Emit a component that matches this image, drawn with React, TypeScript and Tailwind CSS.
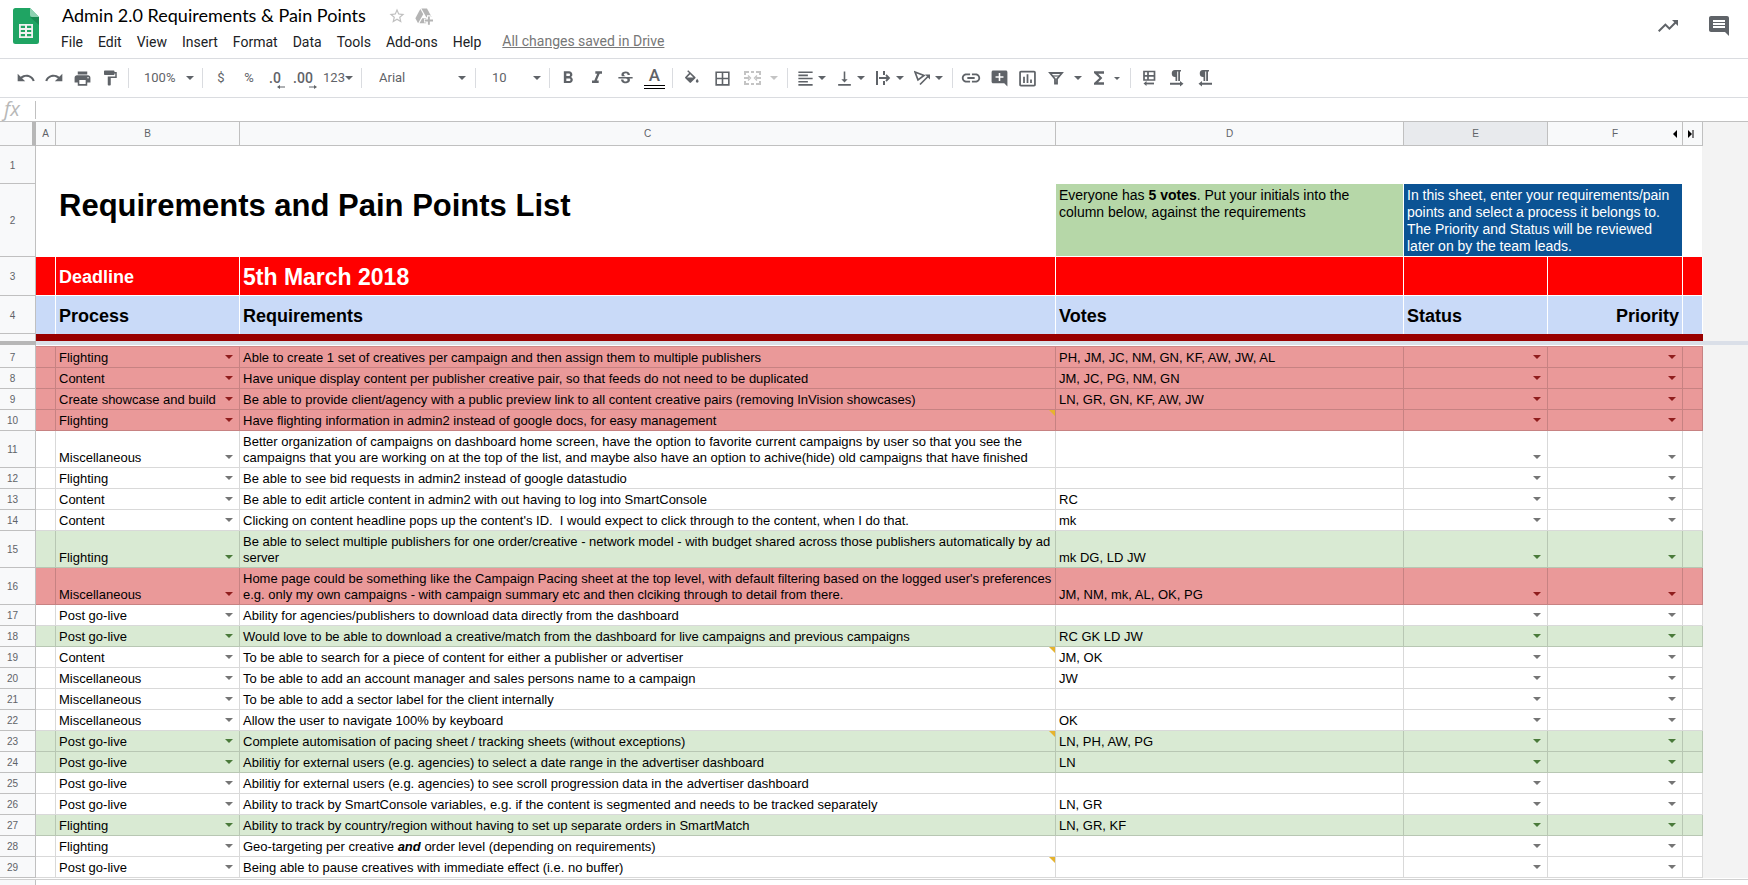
import React from "react";
import {
  MdUndo, MdRedo, MdPrint, MdFormatPaint, MdFormatBold, MdFormatItalic, MdStrikethroughS,
  MdBorderAll, MdFormatAlignLeft, MdVerticalAlignBottom, MdInsertLink,
  MdAddComment, MdInsertChartOutlined, MdFunctions, MdTrendingUp, MdComment, MdStarBorder,
} from "react-icons/md";

type Tone = "red" | "green" | "plain";

type Item = {
  n: number;
  process: string;
  text: React.ReactNode;
  votes?: string;
  tone?: Tone;
  note?: boolean;
};

const items: Item[] = [
  { n: 7, process: "Flighting", text: "Able to create 1 set of creatives per campaign and then assign them to multiple publishers", votes: "PH, JM, JC, NM, GN, KF, AW, JW, AL", tone: "red" },
  { n: 8, process: "Content", text: "Have unique display content per publisher creative pair, so that feeds do not need to be duplicated", votes: "JM, JC, PG, NM, GN", tone: "red" },
  { n: 9, process: "Create showcase and build", text: "Be able to provide client/agency with a public preview link to all content creative pairs (removing InVision showcases)", votes: "LN, GR, GN, KF, AW, JW", tone: "red" },
  { n: 10, process: "Flighting", text: "Have flighting information in admin2 instead of google docs, for easy management", tone: "red", note: true },
  { n: 11, process: "Miscellaneous", text: "Better organization of campaigns on dashboard home screen, have the option to favorite current campaigns by user so that you see the\ncampaigns that you are working on at the top of the list, and maybe also have an option to achive(hide) old campaigns that have finished" },
  { n: 12, process: "Flighting", text: "Be able to see bid requests in admin2 instead of google datastudio" },
  { n: 13, process: "Content", text: "Be able to edit article content in admin2 with out having to log into SmartConsole", votes: "RC" },
  { n: 14, process: "Content", text: "Clicking on content headline pops up the content's ID.  I would expect to click through to the content, when I do that.", votes: "mk" },
  { n: 15, process: "Flighting", text: "Be able to select multiple publishers for one order/creative - network model - with budget shared across those publishers automatically by ad\nserver", votes: "mk DG, LD JW", tone: "green" },
  { n: 16, process: "Miscellaneous", text: "Home page could be something like the Campaign Pacing sheet at the top level, with default filtering based on the logged user's preferences\ne.g. only my own campaigns - with campaign summary etc and then clciking through to detail from there.", votes: "JM, NM, mk, AL, OK, PG", tone: "red" },
  { n: 17, process: "Post go-live", text: "Ability for agencies/publishers to download data directly from the dashboard" },
  { n: 18, process: "Post go-live", text: "Would love to be able to download a creative/match from the dashboard for live campaigns and previous campaigns", votes: "RC GK LD JW", tone: "green" },
  { n: 19, process: "Content", text: "To be able to search for a piece of content for either a publisher or advertiser", votes: "JM, OK", note: true },
  { n: 20, process: "Miscellaneous", text: "To be able to add an account manager and sales persons name to a campaign", votes: "JW" },
  { n: 21, process: "Miscellaneous", text: "To be able to add a sector label for the client internally" },
  { n: 22, process: "Miscellaneous", text: "Allow the user to navigate 100% by keyboard", votes: "OK" },
  { n: 23, process: "Post go-live", text: "Complete automisation of pacing sheet / tracking sheets (without exceptions)", votes: "LN, PH, AW, PG", tone: "green", note: true },
  { n: 24, process: "Post go-live", text: "Abilitiy for external users (e.g. agencies) to select a date range in the advertiser dashboard", votes: "LN", tone: "green" },
  { n: 25, process: "Post go-live", text: "Abilitiy for external users (e.g. agencies) to see scroll progression data in the advertiser dashboard" },
  { n: 26, process: "Post go-live", text: "Ability to track by SmartConsole variables, e.g. if the content is segmented and needs to be tracked separately", votes: "LN, GR" },
  { n: 27, process: "Flighting", text: "Ability to track by country/region without having to set up separate orders in SmartMatch", votes: "LN, GR, KF", tone: "green" },
  { n: 28, process: "Flighting", text: <>Geo-targeting per creative <b><i>and</i></b> order level (depending on requirements)</> },
  { n: 29, process: "Post go-live", text: "Being able to pause creatives with immediate effect (i.e. no buffer)", note: true },
];

const processes = ["Flighting", "Content", "Create showcase and build", "Miscellaneous", "Post go-live"];

const rowBg: Record<Tone, string> = { red: "bg-[#ea9999]", green: "bg-[#d9ead3]", plain: "bg-white" };
const arrowColor: Record<Tone, string> = { red: "text-[#8f1d1d]", green: "text-[#4a7a3a]", plain: "text-[#757575]" };

function Caret({ className = "" }: { className?: string }) {
  return (
    <svg viewBox="0 0 8 4" className={`h-1 w-2 shrink-0 ${className}`} fill="currentColor" aria-hidden="true">
      <path d="M0 0h8L4 4z" />
    </svg>
  );
}

function Tool({ label, className = "w-7", children }: { label: string; className?: string; children: React.ReactNode }) {
  return (
    <button type="button" aria-label={label} className={`flex h-7 items-center justify-center ${className}`}>
      {children}
    </button>
  );
}

function MenuTool({ label, children }: { label: string; children: React.ReactNode }) {
  return (
    <button type="button" aria-label={label} className="flex h-7 w-[39px] items-center gap-px pl-px">
      <span className="flex w-6 justify-center">{children}</span>
      <Caret />
    </button>
  );
}

function Separator() {
  return <div className="h-5 w-px bg-[#dadce0]" />;
}

function Group({ className = "px-1", children }: { className?: string; children: React.ReactNode }) {
  return <div className={`flex items-center ${className}`}>{children}</div>;
}

function ToolSelect({ label, value, className, caret }: { label: string; value: string; className: string; caret: string }) {
  return (
    <div className="relative flex items-center">
      <select aria-label={label} defaultValue={value} className={`h-7 appearance-none bg-transparent text-[13px] ${className}`}>
        <option>{value}</option>
      </select>
      <Caret className={`pointer-events-none absolute ${caret}`} />
    </div>
  );
}

function Decimal({ text, more }: { text: string; more?: boolean }) {
  return (
    <span className="flex flex-col items-end pt-1 pr-1">
      <span className="text-[14px] leading-[14px] font-medium">{text}</span>
      <svg viewBox="0 0 8 4" className="-mr-1 h-1 w-2" aria-hidden="true" fill="currentColor">
        {more ? <path d="M0 1.400h5V0l3 2-3 2V2.600H0z" /> : <path d="M8 1.400H3V0L0 2l3 2V2.600h5z" />}
      </svg>
    </span>
  );
}

function Pilcrow({ rtl }: { rtl?: boolean }) {
  return (
    <svg viewBox="0 0 14 18" className="h-[18px] w-[14px]" fill="currentColor" aria-hidden="true">
      <path d="M5 1h6v1.500h-1V12H8.200V2.500H7.200V12H5.500V8A3.500 3.500 0 0 1 5 1z" />
      {rtl ? <path d="M14 13.800H4V12L.5 14.800 4 17.500v-1.700h10z" /> : <path d="M0 13.800h10V12l3.500 2.800L10 17.500v-1.700H0z" />}
    </svg>
  );
}

function SheetsLogo() {
  return (
    <svg viewBox="0 0 26 36" className="h-9 w-[26px]" aria-hidden="true">
      <path d="M2.500 0H17l9 9v24.500a2.500 2.500 0 0 1-2.500 2.500h-21A2.500 2.500 0 0 1 0 33.500v-31A2.500 2.500 0 0 1 2.500 0z" fill="#1fa463" />
      <path d="M17 9h9v8z" fill="#188a52" />
      <path d="M17 0l9 9h-7a2 2 0 0 1-2-2z" fill="#8ed1b1" />
      <path d="M6 16h14v14H6zM7.800 17.800v2.100h4.200v-2.100zM14 17.800v2.100h4.200v-2.100zM7.800 21.900V24h4.200v-2.100zM14 21.900V24h4.200v-2.100zM7.800 26v2.200h4.200V26zM14 26v2.200h4.200V26z" fill="#f1f1f1" fillRule="evenodd" />
    </svg>
  );
}

function DriveAdd() {
  return (
    <svg viewBox="0 0 24 24" className="h-[18px] w-[18px]" aria-hidden="true">
      <g fill="#b4b4b4">
        <path d="M7.100 2.500L.5 15l3.600 6.500L11 9.500z" />
        <path d="M9.700 15L6 21.500h9V15z" />
        <path d="M22 13L16 2H8.500L15 13.500z" />
      </g>
      <path d="M18.500 11v13M12 18h12" stroke="#fff" strokeWidth="5" />
      <path d="M18.500 12.500v11M13 18h11" stroke="#b4b4b4" strokeWidth="2.600" />
    </svg>
  );
}

function SelectCell({ label, value, tone, options }: { label: string; value: string; tone: Tone; options: string[] }) {
  return (
    <div className="relative flex">
      <select aria-label={label} defaultValue={value} className="h-4 w-full cursor-pointer appearance-none bg-transparent pl-[3px] leading-4">
        {options.map((o) => (
          <option key={o}>{o}</option>
        ))}
      </select>
      <Caret className={`pointer-events-none absolute right-[6px] bottom-[7px] ${arrowColor[tone]}`} />
    </div>
  );
}

const rowHead = "border-r border-b border-[#c0c0c0] bg-[#f8f9fa] p-0 pt-[2px] pr-[10px] text-center align-middle text-[10px] font-normal text-[#5f6368]";
const colHeadBase = "border-r border-b border-[#c0c0c0] p-0 text-center text-[10px] font-normal text-[#5f6368]";
const colHead = `${colHeadBase} bg-[#f8f9fa]`;
const cell = "border-r border-b border-black/15 px-0 pt-[3px] pb-px align-bottom";
const textCell = "border-r border-b border-black/15 px-[3px] pt-[3px] pb-px align-bottom";
const banner = "border-r border-b border-white px-[3px] pt-px pb-0 text-left align-middle";
const heading = "border-r border-white px-[3px] pt-[2px] pb-0";
const noteCell = "border-r border-b border-white px-[3px] pt-[3px] pb-px align-top text-[14px] leading-[17px]";
const filler = "bg-[#f3f3f3] p-0";

export default function App() {
  return (
    <div className="flex min-h-screen w-full flex-col overflow-hidden bg-white font-['Roboto',sans-serif] text-[#5f6368]">
      <header className="flex h-[58px] items-start justify-between pt-2 pr-[17px] pl-[13px]">
        <div className="flex items-start">
          <SheetsLogo />
          <div className="ml-[23px] flex flex-col">
            <div className="flex h-4 items-center">
              <h1 className="pb-[2px] text-[18px] leading-4 text-black font-['Lato',sans-serif]">Admin 2.0 Requirements &amp; Pain Points</h1>
              <button type="button" aria-label="Star" className="ml-[22px] text-[#c0c0c0]"><MdStarBorder size={18} /></button>
              <button type="button" aria-label="Add to Drive" className="ml-[9px]"><DriveAdd /></button>
            </div>
            <nav className="-ml-px mt-2 flex h-5 items-center gap-[15px] text-[14px] text-[#202124]">
              {["File", "Edit", "View", "Insert", "Format", "Data", "Tools", "Add-ons", "Help"].map((m) => (
                <button key={m} type="button">{m}</button>
              ))}
              <a href="#drive" className="ml-[6px] pb-px text-[#777] underline">All changes saved in Drive</a>
            </nav>
          </div>
        </div>
        <div className="flex items-center gap-[27px] pt-[6px]">
          <button type="button" aria-label="Activity"><MdTrendingUp size={24} /></button>
          <button type="button" aria-label="Comments"><MdComment size={24} /></button>
        </div>
      </header>

      <div role="toolbar" aria-label="Formatting" className="flex h-10 items-center border-y border-[#dadce0] text-[13px]">
        <Group className="pr-1 pl-3">
          <Tool label="Undo"><MdUndo size={20} /></Tool>
          <Tool label="Redo"><MdRedo size={20} /></Tool>
          <Tool label="Print"><MdPrint size={19} /></Tool>
          <Tool label="Paint format"><MdFormatPaint size={18} /></Tool>
        </Group>
        <Separator />
        <ToolSelect label="Zoom" value="100%" className="w-[73px] pl-[15px]" caret="right-2" />
        <Separator />
        <Group>
          <Tool label="Format as currency">$</Tool>
          <Tool label="Format as percent">%</Tool>
          <Tool label="Decrease decimal places"><Decimal text=".0" /></Tool>
          <Tool label="Increase decimal places"><Decimal text=".00" more /></Tool>
          <Tool label="More formats" className="w-[38px]"><span>123</span><Caret /></Tool>
        </Group>
        <Separator />
        <ToolSelect label="Font" value="Arial" className="w-[113px] pl-[17px]" caret="right-[9px]" />
        <Separator />
        <ToolSelect label="Font size" value="10" className="w-[73px] pl-4" caret="right-2" />
        <Separator />
        <Group className="px-[3px]">
          <Tool label="Bold" className="w-[29px]"><MdFormatBold size={20} /></Tool>
          <Tool label="Italic" className="w-[29px]"><MdFormatItalic size={20} /></Tool>
          <Tool label="Strikethrough" className="w-[29px]"><MdStrikethroughS size={19} /></Tool>
          <Tool label="Text color" className="w-[29px]">
            <span className="flex flex-col items-center">
              <span className="text-[17px] leading-4 font-medium">A</span>
              <span className="mt-[2px] h-1 w-[21px] border-y border-black" />
            </span>
          </Tool>
        </Group>
        <Separator />
        <Group className="pr-[6px] pl-1">
          <Tool label="Fill color" className="w-[30px]">
            <svg viewBox="0 0 18 18" className="h-[18px] w-[18px]" fill="currentColor" aria-hidden="true">
              <path d="M5.200 1.200L4.200 2.200l1.900 1.900L2.300 7.900a1 1 0 0 0 0 1.400l4.300 4.300a1 1 0 0 0 1.400 0l4.300-4.300a1 1 0 0 0 0-1.400zM4 8.500l3.200-3.200 3.200 3.200zM14.200 9.800s-1.400 1.600-1.400 2.500a1.400 1.400 0 0 0 2.800 0c0-.9-1.400-2.500-1.400-2.500z" />
            </svg>
          </Tool>
          <Tool label="Borders" className="w-[30px]"><MdBorderAll size={19} /></Tool>
          <Tool label="Merge cells" className="w-[30px] text-[#c4c4c4]">
            <svg viewBox="0 0 18 16" className="h-4 w-[18px]" fill="none" stroke="currentColor" strokeWidth="2" aria-hidden="true">
              <path d="M2 5V2h4M8 2h3M13 2h4v3M2 11v3h4M8 14h3M13 14h4v-3M1 8h5M18 8h-5" />
              <path d="M5 5.500L7.500 8 5 10.500M14 5.500L11.500 8l2.500 2.500" strokeWidth="1.400" />
            </svg>
          </Tool>
          <Tool label="Merge options" className="w-[14px] text-[#c4c4c4]"><Caret /></Tool>
        </Group>
        <Separator />
        <Group>
          <MenuTool label="Horizontal align"><MdFormatAlignLeft size={19} /></MenuTool>
          <MenuTool label="Vertical align"><MdVerticalAlignBottom size={19} /></MenuTool>
          <MenuTool label="Text wrapping">
            <svg viewBox="0 0 16 16" className="h-4 w-4" fill="none" stroke="currentColor" strokeWidth="2" aria-hidden="true">
              <path d="M2 1v14M9 1v4M9 11v4M4 8h9" />
              <path d="M11 5l3 3-3 3" strokeWidth="1.800" />
            </svg>
          </MenuTool>
          <MenuTool label="Text rotation">
            <svg viewBox="0 0 16 16" className="h-4 w-4" fill="none" stroke="currentColor" strokeWidth="1.700" aria-hidden="true">
              <path d="M1 2l9 3.500-6 4.500zM6 14.500l8-8" />
              <path d="M11 4.500h5v5z" fill="currentColor" stroke="none" />
            </svg>
          </MenuTool>
        </Group>
        <Separator />
        <Group className="pr-[9px] pl-1">
          <Tool label="Insert link"><MdInsertLink size={22} /></Tool>
          <Tool label="Insert comment"><MdAddComment size={19} /></Tool>
          <Tool label="Insert chart"><MdInsertChartOutlined size={21} /></Tool>
          <Tool label="Filter" className="w-[30px]">
            <svg viewBox="0 0 16 14" className="h-[14px] w-4" fill="none" stroke="currentColor" aria-hidden="true">
              <path d="M2 2h12L9 8v4.500H7V8z" strokeWidth="1.800" />
              <path d="M4 5h8" strokeWidth="1.200" />
            </svg>
          </Tool>
          <Tool label="Filter views" className="w-[14px]"><Caret /></Tool>
          <Tool label="Functions"><MdFunctions size={20} /></Tool>
          <Tool label="More functions" className="w-2">
            <svg viewBox="0 0 6 3" className="h-[3px] w-[6px]" fill="currentColor" aria-hidden="true"><path d="M0 0h6L3 3z" /></svg>
          </Tool>
        </Group>
        <Separator />
        <Group>
          <Tool label="Sheet direction">
            <svg viewBox="0 0 14 16" className="h-4 w-[14px]" fill="none" stroke="currentColor" aria-hidden="true">
              <path d="M2 1.500h10.500v8.500H2zM2 5.800h10.500M6 1.500v8.500" strokeWidth="1.700" />
              <path d="M3.500 13.500H12" strokeWidth="1.800" />
              <path d="M4.500 11v5L1.500 13.500z" fill="currentColor" stroke="none" />
            </svg>
          </Tool>
          <Tool label="Left to right"><Pilcrow /></Tool>
          <Tool label="Right to left"><Pilcrow rtl /></Tool>
        </Group>
      </div>

      <div className="flex h-[23px] items-center">
        <label htmlFor="formula" className="flex h-[18px] w-9 items-center border-r border-[#c0c0c0] pb-[2px] pl-1 text-[20px] leading-none italic text-[#b8b8b8] font-['Open_Sans',sans-serif]">fx</label>
        <input id="formula" type="text" className="h-full flex-1 px-2 text-[13px] outline-none" />
      </div>

      <table className="w-full table-fixed border-separate border-spacing-0 border-t border-[#c0c0c0] text-[13px] leading-4 text-black font-['Liberation_Sans',Arial,sans-serif]">
        <colgroup>
          <col className="w-9" />
          <col className="w-5" />
          <col className="w-[184px]" />
          <col />
          <col className="w-[348px]" />
          <col className="w-[144px]" />
          <col className="w-[135px]" />
          <col className="w-5" />
          <col className="w-[45px]" />
        </colgroup>
        <thead>
          <tr className="h-6">
            <th className="border-r-4 border-b border-r-[#b7b7b7] border-b-[#c0c0c0] bg-[#f8f9fa] p-0" />
            <th scope="col" className={colHead}>A</th>
            <th scope="col" className={colHead}>B</th>
            <th scope="col" className={colHead}>C</th>
            <th scope="col" className={colHead}>D</th>
            <th scope="col" className={`${colHeadBase} bg-[#e8eaed]`}>E</th>
            <th scope="col" className={colHead}>
              <div className="relative">
                F
                <svg viewBox="0 0 4 8" className="absolute top-1 right-[5px] h-2 w-1" aria-hidden="true"><path d="M4 0v8L0 4z" /></svg>
              </div>
            </th>
            <th className={colHead}>
              <svg viewBox="0 0 6 8" className="ml-[5px] h-2 w-[6px]" aria-hidden="true"><path d="M0 0l4 4-4 4zM4.500 0h1v8h-1z" /></svg>
            </th>
            <td className={filler} />
          </tr>
        </thead>
        <tbody>
          <tr className="h-[38px]">
            <th scope="row" className={rowHead}>1</th>
            <td colSpan={7} className="border-r border-black/5" />
            <td className={filler} />
          </tr>
          <tr className="h-[73px]">
            <th scope="row" className={rowHead}>2</th>
            <td />
            <td colSpan={2} className="border-r border-white px-[3px] pt-0 pb-[30px] align-middle text-[31px] leading-9 font-bold whitespace-nowrap">Requirements and Pain Points List</td>
            <td className={`${noteCell} bg-[#b6d7a8]`}>
              <p className="pr-6">Everyone has <b>5 votes</b>. Put your initials into the column below, against the requirements</p>
            </td>
            <td colSpan={2} className={`${noteCell} bg-[#0b5394] text-white`}>
              In this sheet, enter your requirements/pain points and select a process it belongs to. The Priority and Status will be reviewed later on by the team leads.
            </td>
            <td className="border-r border-black/5" />
            <td className={filler} />
          </tr>
          <tr className="h-[39px] bg-[#ff0000] font-bold text-white">
            <th scope="row" className={rowHead}>3</th>
            <td className={banner} />
            <td className={`${banner} text-[18px]`}>Deadline</td>
            <td className={`${banner} text-[23px]`}>5th March 2018</td>
            <td className={banner} />
            <td className={banner} />
            <td className={banner} />
            <td className={banner} />
            <td className={filler} />
          </tr>
          <tr className="h-[38px] bg-[#c9daf8] text-[18px]">
            <th scope="row" className={rowHead}>4</th>
            <td className="border-r border-white" />
            <th scope="col" className={`${heading} text-left`}>Process</th>
            <th scope="col" className={`${heading} text-left`}>Requirements</th>
            <th scope="col" className={`${heading} text-left`}>Votes</th>
            <th scope="col" className={`${heading} text-left`}>Status</th>
            <th scope="col" className={`${heading} text-right`}>Priority</th>
            <td className="border-r border-white" />
            <td className={filler} />
          </tr>
          <tr className="h-[7px] leading-none">
            <td className="border-r border-[#c0c0c0] bg-[#f8f9fa] p-0" />
            <td colSpan={7} className="bg-[#990000] p-0" />
            <td className={filler} />
          </tr>
          <tr className="h-1 leading-none">
            <td className="bg-[#b7b7b7] p-0" />
            <td colSpan={8} className="bg-[#dadfe8] p-0" />
          </tr>
          <tr className="h-[2px] leading-none">
            <td className="border-r border-[#c0c0c0] bg-[#f8f9fa] p-0" />
            <td colSpan={7} className="border-b border-[#cf8787] bg-white p-0" />
            <td className={filler} />
          </tr>
          {items.map((item) => {
            const tone = item.tone ?? "plain";
            return (
              <tr key={item.n} className={`h-[21px] ${rowBg[tone]}`}>
                <th scope="row" className={rowHead}>{item.n}</th>
                <td className={cell} />
                <td className={cell}>
                  <SelectCell label={`Process, row ${item.n}`} value={item.process} tone={tone} options={processes} />
                </td>
                <td className={`relative whitespace-pre ${textCell}`}>
                  {item.text}
                  {item.note && (
                    <svg viewBox="0 0 6 6" className="absolute top-0 right-0 h-[6px] w-[6px]" aria-hidden="true"><path d="M0 0h6v6z" fill="#e6b32e" /></svg>
                  )}
                </td>
                <td className={textCell}>{item.votes}</td>
                <td className={cell}><SelectCell label={`Status, row ${item.n}`} value="" tone={tone} options={[""]} /></td>
                <td className={cell}><SelectCell label={`Priority, row ${item.n}`} value="" tone={tone} options={[""]} /></td>
                <td className={cell} />
                <td className={filler} />
              </tr>
            );
          })}
        </tbody>
      </table>
      <div className="h-[2px] border-b border-[#d0d0d0] bg-white" />
      <div className="flex flex-1">
        <div className="w-9 border-r border-[#c0c0c0] bg-[#f8f9fa]" />
      </div>
    </div>
  );
}
